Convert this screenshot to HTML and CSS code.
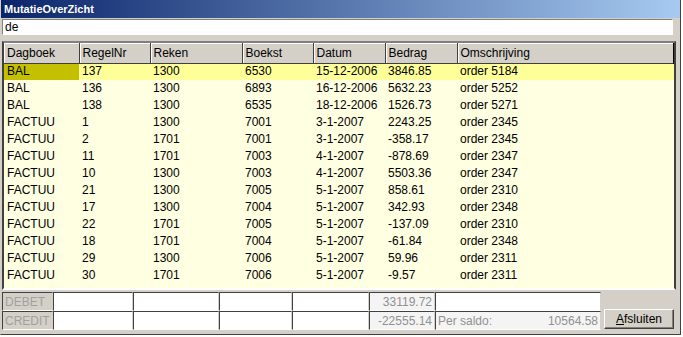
FILE: index.html
```html
<!DOCTYPE html>
<html lang="nl">
<head>
    <meta charset="UTF-8">
    <title>MutatieOverZicht</title>
    <link rel="stylesheet" href="styles.css">
</head>
<body>
    <div class="window">
        <div class="titlebar">MutatieOverZicht</div>
        <div class="search"><input type="text" value="de"></div>

        <div class="grid">
            <table>
                <colgroup>
                    <col style="width: 75px"><col style="width: 71px"><col style="width: 92px"><col style="width: 71px">
                    <col style="width: 72px"><col style="width: 72px"><col>
                </colgroup>
                <thead>
                    <tr>
                        <th>Dagboek</th><th>RegelNr</th><th>Reken</th><th>Boekst</th><th>Datum</th><th>Bedrag</th><th>Omschrijving</th>
                    </tr>
                </thead>
                <tbody>
                    <tr class="current"><td class="cursor">BAL</td><td>137</td><td>1300</td><td>6530</td><td>15-12-2006</td><td>3846.85</td><td>order 5184</td></tr>
                    <tr><td>BAL</td><td>136</td><td>1300</td><td>6893</td><td>16-12-2006</td><td>5632.23</td><td>order 5252</td></tr>
                    <tr><td>BAL</td><td>138</td><td>1300</td><td>6535</td><td>18-12-2006</td><td>1526.73</td><td>order 5271</td></tr>
                    <tr><td>FACTUU</td><td>1</td><td>1300</td><td>7001</td><td>3-1-2007</td><td>2243.25</td><td>order 2345</td></tr>
                    <tr><td>FACTUU</td><td>2</td><td>1701</td><td>7001</td><td>3-1-2007</td><td>-358.17</td><td>order 2345</td></tr>
                    <tr><td>FACTUU</td><td>11</td><td>1701</td><td>7003</td><td>4-1-2007</td><td>-878.69</td><td>order 2347</td></tr>
                    <tr><td>FACTUU</td><td>10</td><td>1300</td><td>7003</td><td>4-1-2007</td><td>5503.36</td><td>order 2347</td></tr>
                    <tr><td>FACTUU</td><td>21</td><td>1300</td><td>7005</td><td>5-1-2007</td><td>858.61</td><td>order 2310</td></tr>
                    <tr><td>FACTUU</td><td>17</td><td>1300</td><td>7004</td><td>5-1-2007</td><td>342.93</td><td>order 2348</td></tr>
                    <tr><td>FACTUU</td><td>22</td><td>1701</td><td>7005</td><td>5-1-2007</td><td>-137.09</td><td>order 2310</td></tr>
                    <tr><td>FACTUU</td><td>18</td><td>1701</td><td>7004</td><td>5-1-2007</td><td>-61.84</td><td>order 2348</td></tr>
                    <tr><td>FACTUU</td><td>29</td><td>1300</td><td>7006</td><td>5-1-2007</td><td>59.96</td><td>order 2311</td></tr>
                    <tr><td>FACTUU</td><td>30</td><td>1701</td><td>7006</td><td>5-1-2007</td><td>-9.57</td><td>order 2311</td></tr>
                </tbody>
            </table>
        </div>

        <div class="totals">
            <div class="totals-rows">
                <div class="trow">
                    <div class="cell label">DEBET</div>
                    <div class="cell w80"></div>
                    <div class="cell w86"></div>
                    <div class="cell w73"></div>
                    <div class="cell w77"></div>
                    <div class="cell w66 num">33119.72</div>
                    <div class="cell w166"></div>
                </div>
                <div class="trow">
                    <div class="cell label">CREDIT</div>
                    <div class="cell w80"></div>
                    <div class="cell w86"></div>
                    <div class="cell w73"></div>
                    <div class="cell w77"></div>
                    <div class="cell w66 num">-22555.14</div>
                    <div class="cell w166 saldo"><span>Per saldo:</span><span>10564.58</span></div>
                </div>
            </div>
            <button type="button"><u>A</u>fsluiten</button>
        </div>
    </div>
</body>
</html>
```

FILE: styles.css
```css
body {
    margin: 0;
    background: #ffffff;
    font-family: "Liberation Sans", Arial, sans-serif;
    font-size: 12px;
}

.window {
    width: 681px;
    height: 335px;
    box-sizing: border-box;
    background: #d4d0c8;
    border-right: 1px solid #404040;
    border-bottom: 1px solid #404040;
    border-left: 1px solid #d4d0c8;
}

.titlebar {
    height: 18px;
    line-height: 18px;
    padding-left: 3px;
    color: #ffffff;
    font-family: "Liberation Sans", Arial, sans-serif;
    font-size: 11px;
    font-weight: bold;
    background: linear-gradient(to right, #0a246a, #a6caf0);
}

.search {
    padding: 1px 7px 0 1px;
}

.search input {
    display: block;
    width: 100%;
    height: 16px;
    box-sizing: border-box;
    margin: 0;
    padding: 0 2px;
    border: 1px solid;
    border-color: #808080 #ffffff #ffffff #808080;
    background: #ffffff;
    font-family: "Liberation Sans", Arial, sans-serif;
    font-size: 12px;
}

.grid {
    margin: 6px 4px 0 1px;
    height: 249px;
    box-sizing: border-box;
    border: 2px solid;
    border-color: #808080 #404040 #ffffff #404040;
    background: #ffffe1;
    overflow: hidden;
}

table {
    width: 671px;
    border-collapse: collapse;
    table-layout: fixed;
}

th {
    height: 20px;
    padding: 0 3px;
    box-sizing: border-box;
    text-align: left;
    font-weight: normal;
    background: #d4d0c8;
    border-right: 1px solid #404040;
    border-bottom: 1px solid #404040;
    box-shadow: inset 1px 1px 0 #ffffff;
}

th:last-child {
    border-right: 2px solid #000000;
}

td {
    height: 17px;
    padding: 0 3px;
    box-sizing: border-box;
    line-height: 15px;
    white-space: nowrap;
}

tr.current td {
    background: #ffff99;
}

tr.current td.cursor {
    background: #c4c000;
}

.totals {
    display: flex;
    align-items: flex-end;
    gap: 3px;
    margin: 2px 0 0 1px;
}

.totals-rows {
    display: flex;
    flex-direction: column;
}

.trow {
    display: flex;
}

.cell {
    height: 19px;
    line-height: 18px;
    box-sizing: border-box;
    padding: 0 2px;
    background: #ffffff;
    border: 1px solid;
    border-color: #404040 #d4d0c8 #ffffff #404040;
    color: #909090;
}

.label {
    width: 51px;
    background: #d4d0c8;
    color: #a0a0a0;
}

.w80 { width: 80px; }
.w86 { width: 86px; }
.w73 { width: 73px; }
.w77 { width: 77px; }
.w66 { width: 66px; }
.w166 { width: 166px; }

.num {
    text-align: right;
    background: #f4f4f4;
}

.saldo {
    display: flex;
    justify-content: space-between;
    background: #f4f4f4;
}

button {
    width: 70px;
    height: 20px;
    margin-bottom: 1px;
    padding: 0;
    font-family: "Liberation Sans", Arial, sans-serif;
    font-size: 12px;
    color: #000000;
    background: #d4d0c8;
    border: 1px solid;
    border-color: #ffffff #404040 #404040 #ffffff;
    box-shadow: inset -1px -1px 0 #808080;
}
```
